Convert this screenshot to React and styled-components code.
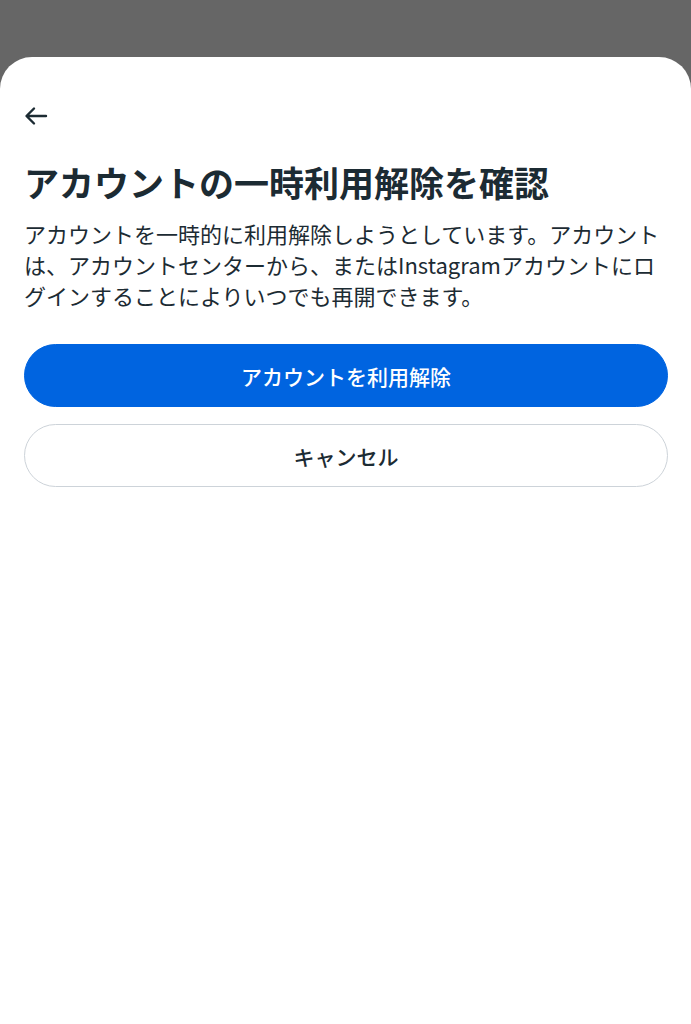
import React from 'react';
import styled, { createGlobalStyle } from 'styled-components';

const GlobalStyle = createGlobalStyle`
  html, body {
    margin: 0;
    padding: 0;
    background: #666666;
  }
  body {
    font-family: "Noto Sans CJK JP", "Noto Sans", sans-serif;
    color: #1c2b33;
  }
`;

const Backdrop = styled.div`
  min-height: 1024px;
  padding-top: 57px;
  box-sizing: border-box;
  display: flex;
  flex-direction: column;
`;

const Sheet = styled.div`
  flex: 1;
  background: #ffffff;
  border-radius: 32px 32px 0 0;
  padding: 46px 23px 0 24px;
  display: flex;
  flex-direction: column;
`;

const BackButton = styled.button`
  width: 26px;
  height: 26px;
  padding: 0;
  border: none;
  background: none;
  display: flex;
  align-items: center;
  color: #1c2b33;
  cursor: pointer;
`;

const Title = styled.h1`
  margin: 30px 0 0;
  font-size: 35px;
  line-height: 46px;
  font-weight: 700;
  letter-spacing: 0;
`;

const Body = styled.p`
  margin: 13px 0 0;
  font-size: 22px;
  line-height: 31px;
  font-weight: 400;
`;

const Actions = styled.div`
  margin-top: 33px;
  display: flex;
  flex-direction: column;
  gap: 17px;
`;

const PillButton = styled.button`
  height: 63px;
  border-radius: 32px;
  font-family: inherit;
  font-size: 21px;
  font-weight: 500;
  cursor: pointer;
  border: 1px solid ${(props) => (props.primary ? '#0064e0' : '#cdd3d9')};
  background: ${(props) => (props.primary ? '#0064e0' : '#ffffff')};
  color: ${(props) => (props.primary ? '#ffffff' : '#1c2b33')};
`;

const ArrowIcon = () => (
  <svg width="24" height="24" viewBox="0 0 24 24" fill="none">
    <path
      d="M22 12H3M10 4.5L2.5 12L10 19.5"
      stroke="currentColor"
      strokeWidth="2.4"
      strokeLinecap="round"
      strokeLinejoin="round"
    />
  </svg>
);

export default function App() {
  return (
    <>
      <GlobalStyle />
      <Backdrop>
        <Sheet>
          <BackButton aria-label="戻る">
            <ArrowIcon />
          </BackButton>
          <Title>アカウントの一時利用解除を確認</Title>
          <Body>
            アカウントを一時的に利用解除しようとしています。アカウントは、アカウントセンターから、またはInstagramアカウントにログインすることによりいつでも再開できます。
          </Body>
          <Actions>
            <PillButton primary>アカウントを利用解除</PillButton>
            <PillButton>キャンセル</PillButton>
          </Actions>
        </Sheet>
      </Backdrop>
    </>
  );
}
